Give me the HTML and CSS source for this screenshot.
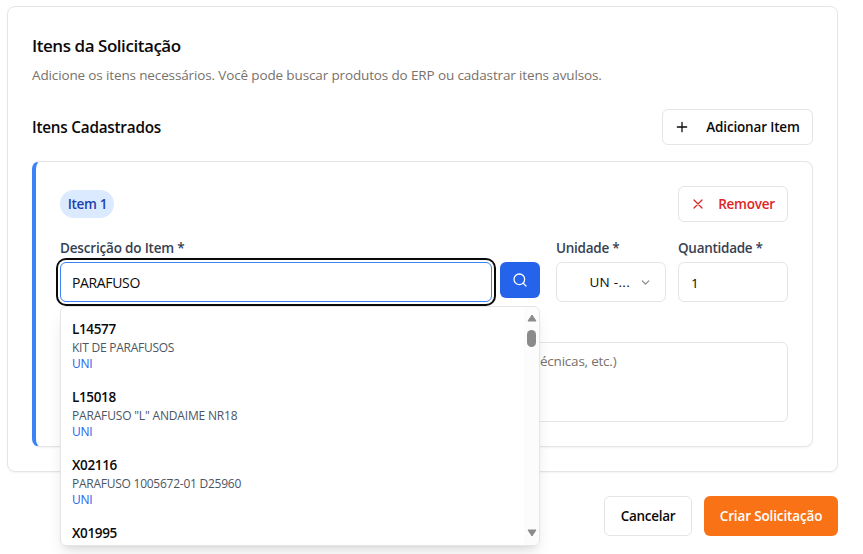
FILE: index.html
```html
<!DOCTYPE html>
<html lang="pt-BR">
<head>
<meta charset="utf-8">
<title>Itens da Solicitação</title>
<link rel="stylesheet" href="styles.css">
</head>
<body>
<main class="page">
  <section class="card">
    <h2 class="card-title">Itens da Solicitação</h2>
    <p class="card-desc">Adicione os itens necessários. Você pode buscar produtos do ERP ou cadastrar itens avulsos.</p>
    <div class="section-head">
      <h3 class="section-title">Itens Cadastrados</h3>
      <button class="btn btn-add" type="button">
        <svg class="icon" viewBox="0 0 24 24"><path d="M5 12h14M12 5v14"/></svg>
        <span>Adicionar Item</span>
      </button>
    </div>
    <article class="item">
      <div class="item-head">
        <span class="badge">Item 1</span>
        <button class="btn btn-remove" type="button">
          <svg class="icon" viewBox="0 0 24 24"><path d="M18 6 6 18M6 6l12 12"/></svg>
          <span>Remover</span>
        </button>
      </div>
      <div class="fields">
        <div class="field">
          <span class="label label-desc">Descrição do Item *</span>
          <div class="search-row">
            <div class="input input-focus">PARAFUSO</div>
            <button class="btn-search" type="button" aria-label="Buscar">
              <svg class="icon" viewBox="0 0 24 24"><circle cx="11" cy="11" r="8"/><path d="m21 21-4.3-4.3"/></svg>
            </button>
            <div class="dropdown">
              <ul class="options">
                <li class="option"><strong>L14577</strong><span class="name name-kit">KIT DE PARAFUSOS</span><span class="unit">UNI</span></li>
                <li class="option"><strong>L15018</strong><span class="name name-l">PARAFUSO "L" ANDAIME NR18</span><span class="unit">UNI</span></li>
                <li class="option"><strong>X02116</strong><span class="name">PARAFUSO 1005672-01 D25960</span><span class="unit">UNI</span></li>
                <li class="option"><strong>X01995</strong></li>
              </ul>
              <div class="scrollbar">
                <svg class="arrow" viewBox="0 0 10 8"><path d="M5 1 9 7H1Z"/></svg>
                <div class="thumb"></div>
                <svg class="arrow arrow-down" viewBox="0 0 10 8"><path d="M1 1h8L5 7Z"/></svg>
              </div>
            </div>
          </div>
        </div>
        <div class="field">
          <span class="label label-unit">Unidade *</span>
          <div class="input select"><span>UN -...</span>
            <svg class="chevron" viewBox="0 0 24 24"><path d="m6 9 6 6 6-6"/></svg>
          </div>
        </div>
        <div class="field">
          <span class="label label-qty">Quantidade *</span>
          <div class="input">1</div>
        </div>
      </div>
      <div class="notes">écnicas, etc.)</div>
    </article>
  </section>
  <footer class="actions">
    <button class="btn btn-cancel" type="button">Cancelar</button>
    <button class="btn btn-primary" type="button">Criar Solicitação</button>
  </footer>
</main>
</body>
</html>
```
FILE: styles.css
```css
* { box-sizing: border-box; }
body {
  margin: 0;
  height: 554px;
  overflow: hidden;
  background: #fff;
  color: #0c0a09;
  font-family: "Open Sans", "Noto Sans", sans-serif;
  font-size: 13.5px;
  line-height: 20px;
}
h2, h3, p, ul { margin: 0; padding: 0; }
button { font: inherit; padding: 0; border: 0; }
.page { padding: 6px 25px 0 7px; }
.card {
  height: 466px;
  padding: 24px;
  border: 1px solid #e5e5e5;
  border-radius: 8px;
  box-shadow: 0 1px 2px rgba(0, 0, 0, .05);
}
.card-title {
  margin-top: 2px;
  font-size: 17px;
  line-height: 26px;
  font-weight: 600;
  letter-spacing: -.45px;
}
.card-desc {
  margin-top: 6px;
  color: #78716c;
  letter-spacing: -.135px;
}
.section-head {
  display: flex;
  align-items: center;
  justify-content: space-between;
  margin: 24px 0 16px;
}
.section-title { font-size: 15.3px; font-weight: 600; letter-spacing: -.23px; }
.btn {
  display: flex;
  align-items: center;
  justify-content: center;
  height: 36px;
  border: 1px solid #e5e5e5;
  border-radius: 6px;
  background: #fff;
  color: #0c0a09;
  font-weight: 600;
}
.icon {
  width: 16px;
  height: 16px;
  fill: none;
  stroke: currentColor;
  stroke-width: 1.9;
  stroke-linecap: round;
  stroke-linejoin: round;
}
.btn-add { width: 151px; gap: 16px; padding-right: 1px; letter-spacing: -.16px; }
.btn-remove { width: 110px; gap: 12px; padding-right: 1px; color: #dc2626; letter-spacing: -.25px; }
.item {
  height: 286px;
  padding: 24px;
  border: 1px solid #e5e5e5;
  border-left: 4px solid #3b82f6;
  border-radius: 8px;
  box-shadow: 0 1px 2px rgba(0, 0, 0, .05);
}
.item-head { display: flex; align-items: center; justify-content: space-between; }
.badge {
  width: 54px;
  height: 28px;
  padding-left: 1px;
  border-radius: 14px;
  background: #dbeafe;
  color: #1e40af;
  font-weight: 600;
  line-height: 28px;
  text-align: center;
  letter-spacing: -.3px;
}
.fields {
  display: grid;
  grid-template-columns: 484px 110px 110px;
  column-gap: 12px;
  margin-top: 16px;
}
.label {
  display: block;
  height: 24px;
  color: #374151;
  font-weight: 600;
}
.label-desc { letter-spacing: -.18px; }
.label-unit { letter-spacing: -.25px; }
.label-qty { letter-spacing: -.28px; }
.search-row { position: relative; display: flex; gap: 8px; width: 480px; }
.input {
  height: 40px;
  padding: 0 12px;
  border: 1px solid #e5e5e5;
  border-radius: 6px;
  background: #fff;
  line-height: 40px;
}
.input-focus {
  flex: 1;
  padding-left: 11px;
  border-color: #3b82f6;
  box-shadow: 0 0 0 2px #fff, 0 0 0 4px #0c0a09;
  font-size: 14px;
  letter-spacing: -.35px;
}
.btn-search {
  display: flex;
  align-items: center;
  justify-content: center;
  width: 40px;
  height: 36px;
  border-radius: 6px;
  background: #2563eb;
  color: #fff;
}
.select {
  display: flex;
  align-items: center;
  justify-content: flex-end;
  gap: 9px;
  padding-right: 13px;
  letter-spacing: .3px;
}
.chevron {
  width: 13px;
  height: 13px;
  fill: none;
  stroke: #858280;
  stroke-width: 2;
  stroke-linecap: round;
  stroke-linejoin: round;
}
.notes {
  height: 80px;
  margin-top: 40px;
  padding: 8px 12px 0 479px;
  border: 1px solid #e5e5e5;
  border-radius: 6px;
  color: #78716c;
  letter-spacing: -.22px;
}
.dropdown {
  position: absolute;
  z-index: 2;
  top: 44px;
  left: 0;
  display: flex;
  width: 480px;
  height: 240px;
  overflow: hidden;
  border: 1px solid #e5e5e5;
  border-radius: 6px;
  background: #fff;
}
.search-row::after {
  content: "";
  position: absolute;
  top: 44px;
  left: 0;
  width: 480px;
  height: 240px;
  border-radius: 6px;
  box-shadow: 0 10px 15px -3px rgba(0, 0, 0, .1), 0 4px 6px -4px rgba(0, 0, 0, .1);
}
.options { flex: 1; padding-top: 4px; list-style: none; }
.option { height: 68px; padding: 8px 11px; font-size: 12px; line-height: 16px; }
.option strong {
  display: block;
  margin-bottom: 1px;
  font-size: 13.5px;
  line-height: 20px;
  font-weight: 600;
  letter-spacing: -.35px;
}
.name, .unit { display: block; }
.name { color: #4b5563; letter-spacing: -.25px; }
.name-l { letter-spacing: -.17px; }
.unit { color: #2563eb; letter-spacing: -.25px; }
.scrollbar {
  display: flex;
  flex-direction: column;
  align-items: center;
  width: 15px;
  padding: 7px 0 8px;
  background: #fcfcfc;
}
.arrow { width: 10px; height: 8px; fill: #8b8b8b; stroke: #8b8b8b; stroke-linejoin: round; }
.thumb { width: 9px; height: 17px; margin-top: 8px; border-radius: 5px; background: #8b8b8b; }
.arrow-down { margin-top: auto; }
.actions { display: flex; justify-content: flex-end; gap: 12px; margin-top: 24px; }
.actions .btn { height: 40px; }
.btn-cancel { width: 88px; letter-spacing: -.3px; }
.actions .btn-primary {
  width: 134px;
  border: 0;
  background: #f97316;
  color: #fff;
  letter-spacing: -.14px;
}
```
